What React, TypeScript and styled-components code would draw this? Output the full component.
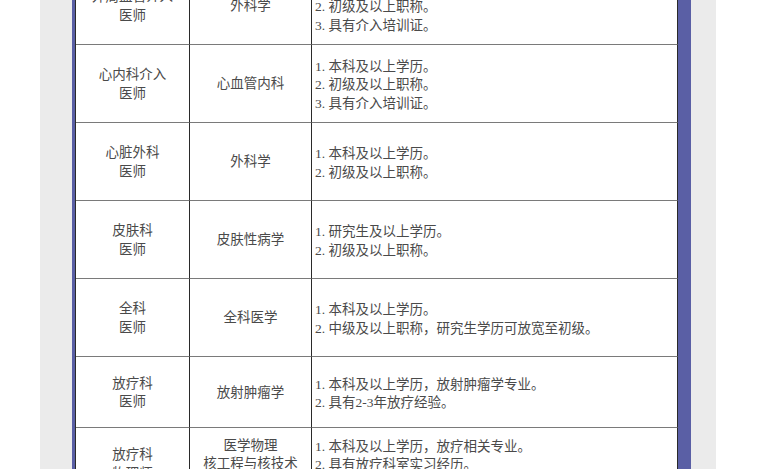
import styled, { createGlobalStyle } from 'styled-components';

const GlobalStyle = createGlobalStyle`
  html, body {
    margin: 0;
    padding: 0;
    background: #ffffff;
  }
`;

const Page = styled.div`
  display: flex;
  height: 469px;
  overflow: hidden;
  padding: 0 41px 0 40px;
  background: #ffffff;
`;

const Frame = styled.div`
  display: flex;
  padding: 0 25px 0 32px;
  background: #ebebeb;
`;

const Panel = styled.div`
  display: flex;
  flex-direction: column;
  background: #ffffff;
  border-left: 3px solid #5a5fa5;
  border-right: 13px solid #5a5fa5;
`;

const Table = styled.table`
  width: 603px;
  margin-top: -33px;
  table-layout: fixed;
  border-collapse: separate;
  border-spacing: 0;
  border-left: 1px solid #2a2a2a;
  font-family: 'Liberation Serif', 'Noto Sans CJK SC', serif;
  font-size: 13.5px;
  font-weight: 400;
  color: #4a4a4a;
`;

const Row = styled.tr<{ $h: number }>`
  height: ${(p) => p.$h}px;
`;

const Cell = styled.td<{ $left?: boolean }>`
  padding: ${(p) => (p.$left ? '4px 0 0 3px' : '2px 0 0 0')};
  border-right: 1px solid #2a2a2a;
  border-bottom: 1px solid #7a7a7a;
  text-align: ${(p) => (p.$left ? 'left' : 'center')};
  vertical-align: middle;
  line-height: 18.5px;
  white-space: nowrap;
  overflow: hidden;
`;

const Line = styled.div``;

type Item = { h: number; post: string[]; major: string[]; req: string[] };

const rows: Item[] = [
  {
    h: 78,
    post: ['外周血管介入', '医师'],
    major: ['外科学'],
    req: ['1. 本科及以上学历。', '2. 初级及以上职称。', '3. 具有介入培训证。'],
  },
  {
    h: 78,
    post: ['心内科介入', '医师'],
    major: ['心血管内科'],
    req: ['1. 本科及以上学历。', '2. 初级及以上职称。', '3. 具有介入培训证。'],
  },
  {
    h: 78,
    post: ['心脏外科', '医师'],
    major: ['外科学'],
    req: ['1. 本科及以上学历。', '2. 初级及以上职称。'],
  },
  {
    h: 78,
    post: ['皮肤科', '医师'],
    major: ['皮肤性病学'],
    req: ['1. 研究生及以上学历。', '2. 初级及以上职称。'],
  },
  {
    h: 78,
    post: ['全科', '医师'],
    major: ['全科医学'],
    req: ['1. 本科及以上学历。', '2. 中级及以上职称，研究生学历可放宽至初级。'],
  },
  {
    h: 71,
    post: ['放疗科', '医师'],
    major: ['放射肿瘤学'],
    req: ['1. 本科及以上学历，放射肿瘤学专业。', '2. 具有2-3年放疗经验。'],
  },
  {
    h: 72,
    post: ['放疗科', '物理师'],
    major: ['医学物理', '核工程与核技术', '生物医学工程'],
    req: ['1. 本科及以上学历，放疗相关专业。', '2. 具有放疗科室实习经历。', '3. 具有物理师资格证。'],
  },
];

const App: React.FunctionComponent = () => {
  return (
    <>
      <GlobalStyle />
      <Page>
        <Frame>
          <Panel>
            <Table>
              <colgroup>
                <col style={{ width: 114 }} />
                <col style={{ width: 122 }} />
                <col style={{ width: 366 }} />
              </colgroup>
              <tbody>
                {rows.map((r, i) => (
                  <Row key={i} $h={r.h}>
                    <Cell>
                      {r.post.map((t) => (
                        <Line key={t}>{t}</Line>
                      ))}
                    </Cell>
                    <Cell>
                      {r.major.map((t) => (
                        <Line key={t}>{t}</Line>
                      ))}
                    </Cell>
                    <Cell $left>
                      {r.req.map((t) => (
                        <Line key={t}>{t}</Line>
                      ))}
                    </Cell>
                  </Row>
                ))}
              </tbody>
            </Table>
          </Panel>
        </Frame>
      </Page>
    </>
  );
};

export default App;
